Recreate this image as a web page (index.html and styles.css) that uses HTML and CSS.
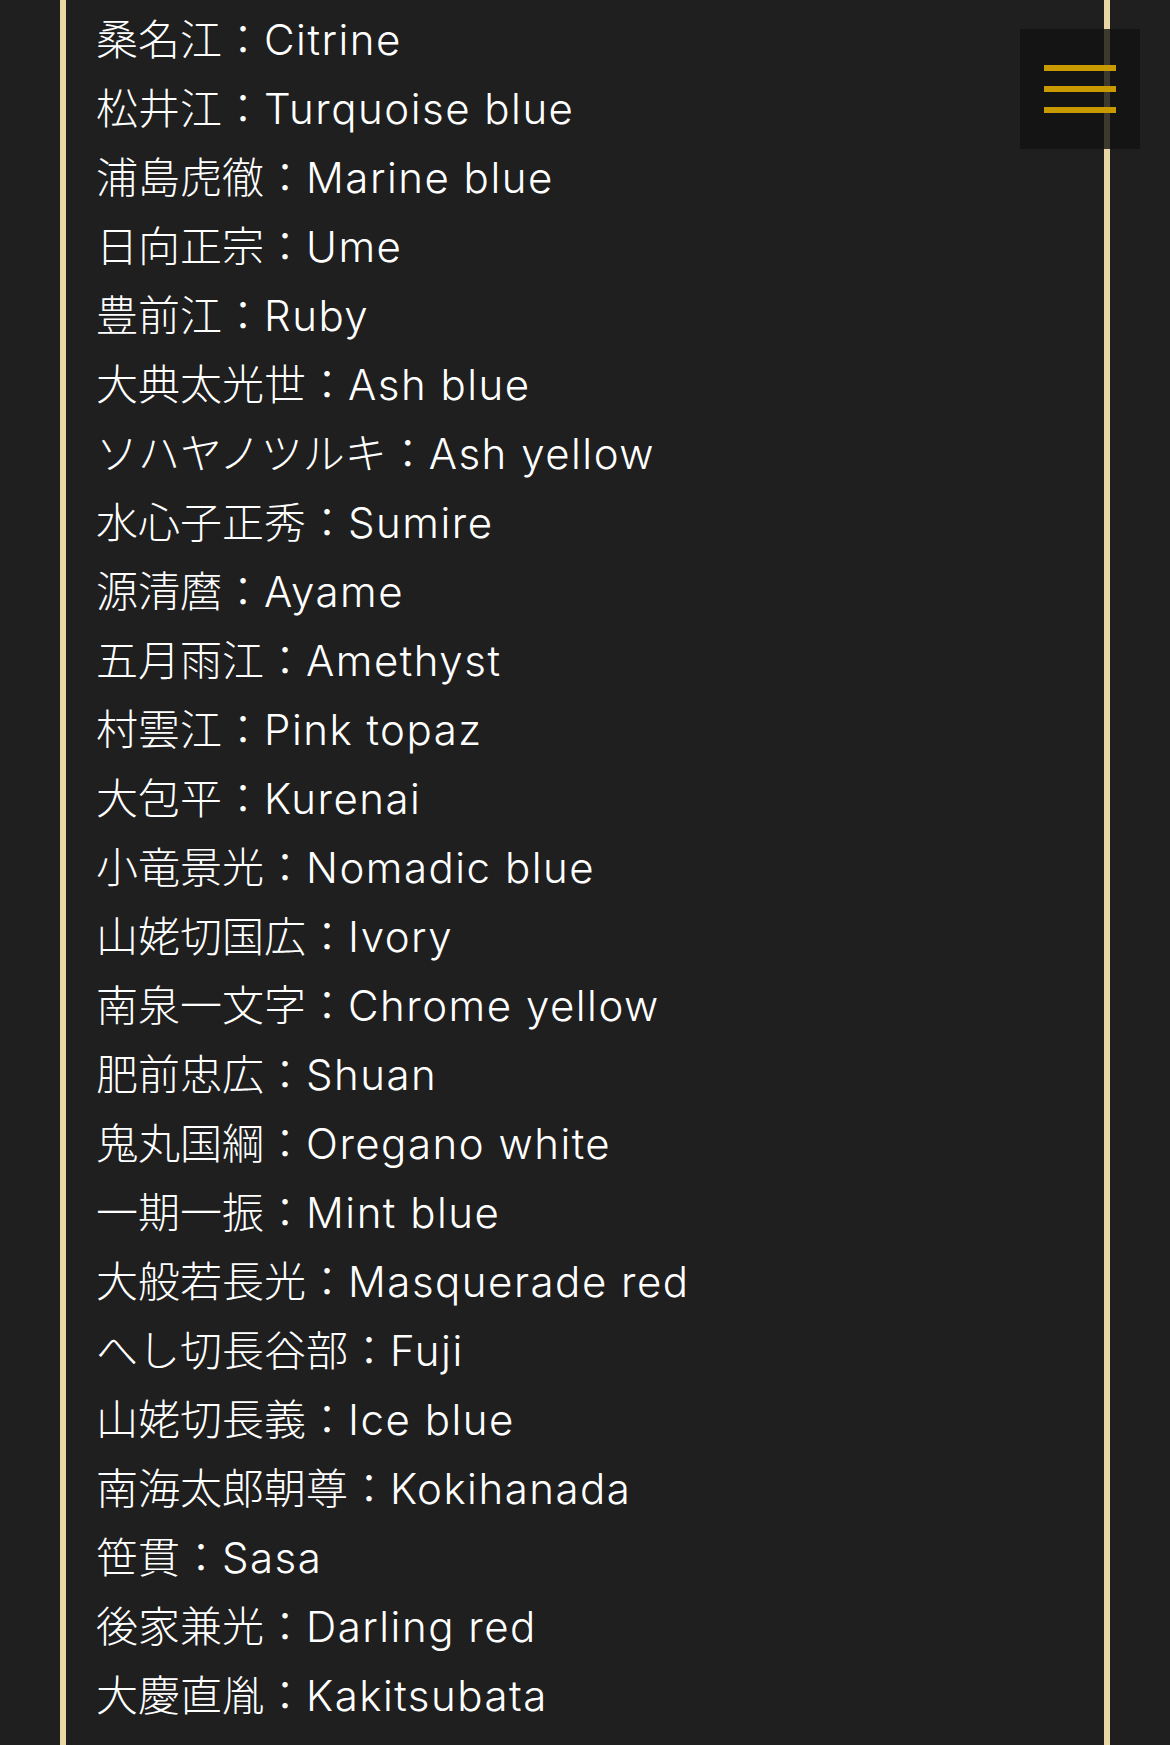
FILE: index.html
```html
<!DOCTYPE html>
<html lang="ja">
<head>
<meta charset="utf-8">
<title>カラー一覧</title>
<link rel="stylesheet" href="styles.css">
</head>
<body>
<div class="frame">
  <ul class="list">
    <li>桑名江：<span class="en">Citrine</span></li>
    <li>松井江：<span class="en">Turquoise blue</span></li>
    <li>浦島虎徹：<span class="en">Marine blue</span></li>
    <li>日向正宗：<span class="en">Ume</span></li>
    <li>豊前江：<span class="en">Ruby</span></li>
    <li>大典太光世：<span class="en">Ash blue</span></li>
    <li>ソハヤノツルキ：<span class="en">Ash yellow</span></li>
    <li>水心子正秀：<span class="en">Sumire</span></li>
    <li>源清麿：<span class="en">Ayame</span></li>
    <li>五月雨江：<span class="en">Amethyst</span></li>
    <li>村雲江：<span class="en">Pink topaz</span></li>
    <li>大包平：<span class="en">Kurenai</span></li>
    <li>小竜景光：<span class="en">Nomadic blue</span></li>
    <li>山姥切国広：<span class="en">Ivory</span></li>
    <li>南泉一文字：<span class="en">Chrome yellow</span></li>
    <li>肥前忠広：<span class="en">Shuan</span></li>
    <li>鬼丸国綱：<span class="en">Oregano white</span></li>
    <li>一期一振：<span class="en">Mint blue</span></li>
    <li>大般若長光：<span class="en">Masquerade red</span></li>
    <li>へし切長谷部：<span class="en">Fuji</span></li>
    <li>山姥切長義：<span class="en">Ice blue</span></li>
    <li>南海太郎朝尊：<span class="en">Kokihanada</span></li>
    <li>笹貫：<span class="en">Sasa</span></li>
    <li>後家兼光：<span class="en">Darling red</span></li>
    <li>大慶直胤：<span class="en">Kakitsubata</span></li>
  </ul>
</div>
<button class="menu-btn" aria-label="メニュー">
  <span class="bar"></span>
  <span class="bar"></span>
  <span class="bar"></span>
</button>
</body>
</html>
```
FILE: styles.css
```css
html, body {
  margin: 0;
  padding: 0;
  background: #1f1f1f;
}
body {
  font-family: "Inter", "Noto Sans CJK JP", sans-serif;
  font-weight: 300;
  color: #ffffff;
  height: 1745px;
  overflow: hidden;
}
.frame {
  margin: 0 60px;
  border-left: 6px solid #e9d6a7;
  border-right: 6px solid #e9d6a7;
  padding: 5px 30px 0 30px;
  min-height: 1745px;
  box-sizing: border-box;
}
.list {
  list-style: none;
  margin: 0;
  padding: 0;
}
.list li {
  font-size: 42px;
  line-height: 69px;
  white-space: nowrap;
}
.list .en {
  letter-spacing: 1.5px;
}
.menu-btn {
  position: fixed;
  top: 29px;
  right: 30px;
  width: 120px;
  height: 120px;
  border: 0;
  padding: 0;
  background: rgba(17, 17, 17, 0.8);
  display: flex;
  flex-direction: column;
  align-items: center;
  justify-content: center;
  gap: 15px;
}
.menu-btn .bar {
  display: block;
  width: 72px;
  height: 6px;
  background: #c99a00;
}
```
